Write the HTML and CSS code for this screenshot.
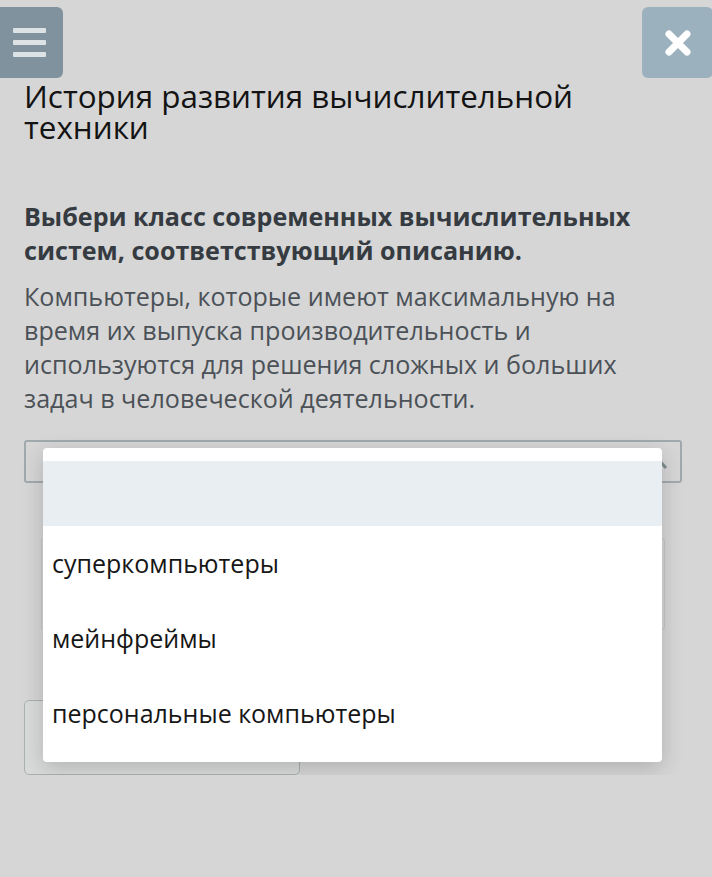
FILE: index.html
```html
<!DOCTYPE html>
<html lang="ru">
<head>
    <meta charset="UTF-8">
    <meta name="viewport" content="width=device-width">
    <title>История развития вычислительной техники</title>
    <link rel="stylesheet" href="styles.css">
</head>
<body>

<div class=top>
  <div class="btn menu">
    <span></span><span></span><span></span>
  </div>
  <div class="btn close">
    <svg width="30" height="30" viewBox="0 0 30 30">
      <path d="M6 6 L24 24 M24 6 L6 24" stroke="#fff" stroke-width="7" stroke-linecap="round"/>
    </svg>
  </div>
</div>

<div class=main>
  <h1 class=title>История развития вычислительной техники</h1>

  <p class=question>Выбери класс современных вычислительных систем, соответствующий описанию.</p>
  <p class=text>Компьютеры, которые имеют максимальную на время их выпуска производительность и используются для решения сложных и больших задач в человеческой деятельности.</p>

  <div class=select>
    <svg class=chevron width="24" height="16" viewBox="0 0 24 16">
      <polyline points="2,14 12,3 22,14" fill="none" stroke="#7f8b8e" stroke-width="3"/>
    </svg>
    <ul class=options>
      <li class=active></li>
      <li>суперкомпьютеры</li>
      <li>мейнфреймы</li>
      <li>персональные компьютеры</li>
    </ul>
  </div>

  <div class=answer></div>
  <div class=check></div>
</div>

</body>
</html>
```

FILE: styles.css
```css
body {
    margin: 0;
    background: #d6d6d6;
    font-family: "Open Sans", "Liberation Sans", sans-serif;
}
.top {
    display: flex;
    justify-content: space-between;
    padding-top: 7px;
}
.btn {
    width: 71px;
    height: 71px;
    border-radius: 6px;
    display: flex;
    align-items: center;
    justify-content: center;
}
.menu {
    width: 64px;
    margin-left: -1px;
    background: #7f929e;
    flex-direction: column;
    gap: 7px;
    border-radius: 0 6px 6px 0;
}
.menu span {
    display: block;
    width: 33px;
    height: 5px;
    background: #dde2e5;
    border-radius: 1px;
    margin-left: -3px;
}
.close {
    background: #9cb1be;
    margin-right: -1px;
}
.main {
    padding: 0 30px 0 24px;
}
.title {
    font-weight: normal;
    font-size: 31.4px;
    line-height: 31px;
    color: #131313;
    margin: 2px 0 0;
    width: 600px;
}
.question {
    font-weight: bold;
    font-size: 25.1px;
    line-height: 34px;
    color: #353b41;
    margin: 57px 0 0;
}
.text {
    font-size: 25.1px;
    line-height: 34px;
    color: #4b5157;
    margin: 12px 0 0;
    width: 630px;
}
.select {
    position: relative;
    height: 39px;
    margin-top: 25px;
    border: 2px solid #a0aaac;
    border-radius: 3px;
}
.chevron {
    position: absolute;
    right: 12px;
    top: 12px;
}
.options {
    position: absolute;
    top: 6px;
    left: 17px;
    right: 18px;
    z-index: 2;
    list-style: none;
    margin: 0;
    padding: 13px 0 11px;
    background: #fff;
    border-radius: 4px;
    box-shadow: 0 6px 22px rgba(0, 0, 0, 0.18);
}
.options li {
    height: 75px;
    line-height: 75px;
    padding: 0 9px;
    font-size: 25px;
    color: #161616;
}
.options li.active {
    height: 65px;
    background: #e8eef1;
}
.answer {
    height: 90px;
    margin: 55px 0 0 17px;
    width: 622px;
    border: 1px solid #c4c8ca;
    border-radius: 3px;
}
.check {
    width: 274px;
    height: 73px;
    margin-top: 70px;
    border: 1px solid #aab1b3;
    border-radius: 5px;
    background: #d9dbdb;
}
```
